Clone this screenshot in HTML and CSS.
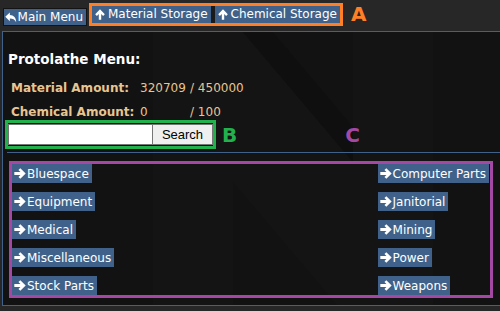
FILE: index.html
```html
<!DOCTYPE html>
<html lang="en">
	<head>
		<meta charset="UTF-8" />
		<title>Protolathe</title>
		<link rel="stylesheet" href="styles.css">
	</head>
	<body>
		<div class="topbar">
			<button class="btn main-menu">
				<svg class="icon" viewBox="0 0 12 11"><path d="M5 0.3L0.3 4.8 5 9.3V6.5c3.2 0 5 1 6.6 4C11.6 5.8 9 3.1 5 3z" fill="#fff"/></svg>Main Menu
			</button>
			<div class="mark-a">
				<button class="btn">
					<svg class="icon" viewBox="0 0 10 11"><path d="M5 0.3L0.2 5.2 1.9 6.9 3.8 5V10.7h2.4V5l1.9 1.9 1.7-1.7z" fill="#fff"/></svg>Material Storage
				</button>
				<button class="btn">
					<svg class="icon" viewBox="0 0 10 11"><path d="M5 0.3L0.2 5.2 1.9 6.9 3.8 5V10.7h2.4V5l1.9 1.9 1.7-1.7z" fill="#fff"/></svg>Chemical Storage
				</button>
			</div>
			<span class="label label-a">A</span>
		</div>
		<div class="panel">
			<svg class="logo" viewBox="0 0 500 280">
				<path d="M150 0h90l110 130V0h80v280h-90L230 150v130h-80z" fill="#141414"/>
				<path d="M240 0h30l80 95v35z" fill="#0f0f0f"/>
			</svg>
			<h2 class="title">Protolathe Menu:</h2>
			<table class="amounts">
				<tr>
					<td class="amount-label">Material Amount:</td>
					<td class="amount-value">320709</td>
					<td class="amount-max">/ 450000</td>
				</tr>
				<tr>
					<td class="amount-label">Chemical Amount:</td>
					<td class="amount-value">0</td>
					<td class="amount-max">/ 100</td>
				</tr>
			</table>
			<div class="search-row">
				<div class="mark-b">
					<input type="text" class="search-input" />
					<button class="search-button">Search</button>
				</div>
				<span class="label label-b">B</span>
				<span class="label label-c">C</span>
			</div>
			<div class="divider"></div>
			<div class="mark-c">
				<div class="column">
					<button class="btn cat"><svg class="icon" viewBox="0 0 11 10"><path d="M5.8 0.2L4.1 1.9 5.9 3.7H0.3v2.6h5.6L4.1 8.1l1.7 1.7 4.9-4.8z" fill="#fff"/></svg>Bluespace</button>
					<button class="btn cat"><svg class="icon" viewBox="0 0 11 10"><path d="M5.8 0.2L4.1 1.9 5.9 3.7H0.3v2.6h5.6L4.1 8.1l1.7 1.7 4.9-4.8z" fill="#fff"/></svg>Equipment</button>
					<button class="btn cat"><svg class="icon" viewBox="0 0 11 10"><path d="M5.8 0.2L4.1 1.9 5.9 3.7H0.3v2.6h5.6L4.1 8.1l1.7 1.7 4.9-4.8z" fill="#fff"/></svg>Medical</button>
					<button class="btn cat"><svg class="icon" viewBox="0 0 11 10"><path d="M5.8 0.2L4.1 1.9 5.9 3.7H0.3v2.6h5.6L4.1 8.1l1.7 1.7 4.9-4.8z" fill="#fff"/></svg>Miscellaneous</button>
					<button class="btn cat"><svg class="icon" viewBox="0 0 11 10"><path d="M5.8 0.2L4.1 1.9 5.9 3.7H0.3v2.6h5.6L4.1 8.1l1.7 1.7 4.9-4.8z" fill="#fff"/></svg>Stock Parts</button>
				</div>
				<div class="column">
					<button class="btn cat"><svg class="icon" viewBox="0 0 11 10"><path d="M5.8 0.2L4.1 1.9 5.9 3.7H0.3v2.6h5.6L4.1 8.1l1.7 1.7 4.9-4.8z" fill="#fff"/></svg>Computer Parts</button>
					<button class="btn cat"><svg class="icon" viewBox="0 0 11 10"><path d="M5.8 0.2L4.1 1.9 5.9 3.7H0.3v2.6h5.6L4.1 8.1l1.7 1.7 4.9-4.8z" fill="#fff"/></svg>Janitorial</button>
					<button class="btn cat"><svg class="icon" viewBox="0 0 11 10"><path d="M5.8 0.2L4.1 1.9 5.9 3.7H0.3v2.6h5.6L4.1 8.1l1.7 1.7 4.9-4.8z" fill="#fff"/></svg>Mining</button>
					<button class="btn cat"><svg class="icon" viewBox="0 0 11 10"><path d="M5.8 0.2L4.1 1.9 5.9 3.7H0.3v2.6h5.6L4.1 8.1l1.7 1.7 4.9-4.8z" fill="#fff"/></svg>Power</button>
					<button class="btn cat"><svg class="icon" viewBox="0 0 11 10"><path d="M5.8 0.2L4.1 1.9 5.9 3.7H0.3v2.6h5.6L4.1 8.1l1.7 1.7 4.9-4.8z" fill="#fff"/></svg>Weapons</button>
				</div>
			</div>
		</div>
	</body>
</html>
```

FILE: styles.css
```css
* {
	padding: 0;
	margin: 0;
	box-sizing: border-box;
}
body {
	background-color: #272727;
	color: #fff;
	font-family: "DejaVu Sans", Verdana, sans-serif;
	font-size: 12px;
	height: 311px;
	overflow: hidden;
}
button {
	font-family: inherit;
	font-size: 12px;
	border: none;
	cursor: pointer;
}
.btn {
	display: flex;
	align-items: center;
	gap: 2px;
	background-color: #40628a;
	color: #fff;
	height: 17px;
	padding: 0 3px 0 2px;
	white-space: nowrap;
}
.icon {
	width: 12px;
	height: 11px;
}
.topbar {
	display: flex;
	align-items: center;
	height: 31px;
	padding-left: 3px;
}
.main-menu {
	height: 18px;
	border: 1px solid #141414;
	margin-top: 3px;
	width: 84px;
	padding-left: 1px;
	gap: 1px;
}
.mark-a {
	display: flex;
	gap: 4px;
	border: 3px solid #ff7f27;
	margin-left: 2px;
	margin-bottom: 3px;
	background-color: #1a1a1a;
}
.mark-a .btn {
	height: 17px;
}
.label {
	font-weight: bold;
	font-size: 20px;
}
.label-a {
	color: #ff7f27;
	margin-left: 8px;
	margin-bottom: 3px;
}
.panel {
	position: relative;
	margin-left: 2px;
	height: 275px;
	border: 1px solid #40628a;
	border-right: none;
	background-color: #121212;
	overflow: hidden;
}
.panel > *:not(.logo) {
	position: relative;
}
.logo {
	position: absolute;
	left: 0;
	top: 0;
	width: 500px;
	height: 280px;
}
.title {
	font-size: 13.5px;
	font-weight: bold;
	margin: 17px 0 0 5px;
	line-height: 20px;
}
.amounts {
	border-collapse: collapse;
	margin: 7px 0 0 6px;
	color: #e8c590;
}
.amounts td {
	padding: 0 2px;
	height: 24px;
}
.amount-label {
	font-weight: bold;
	width: 129px;
}
.amount-value {
	width: 50px;
}
.search-row {
	display: flex;
	align-items: center;
	margin: -4px 0 0 2px;
}
.mark-b {
	display: flex;
	border: 3px solid #22b14c;
	padding: 1px 0 1px 0;
}
.search-input {
	width: 144px;
	height: 21px;
	border: 1px solid #767676;
	border-right: none;
	background-color: #fff;
}
.search-button {
	width: 61px;
	height: 21px;
	background-color: #efefef;
	border: 1px solid #767676;
	color: #000;
	font-family: "Liberation Sans", Arial, sans-serif;
	font-size: 13px;
}
.label-b {
	color: #22b14c;
	margin-left: 6px;
}
.label-c {
	color: #a349a4;
	margin-left: 108px;
}
.divider {
	height: 1px;
	background-color: #40628a;
	margin: 3px 0 0 4px;
}
.mark-c {
	display: flex;
	justify-content: space-between;
	border: 3px solid #a349a4;
	margin: 8px 7px 0 6px;
	padding-right: 1px;
}
.column {
	display: flex;
	flex-direction: column;
	align-items: flex-start;
	gap: 9px;
}
.cat {
	height: 19px;
	gap: 1px;
}
```
